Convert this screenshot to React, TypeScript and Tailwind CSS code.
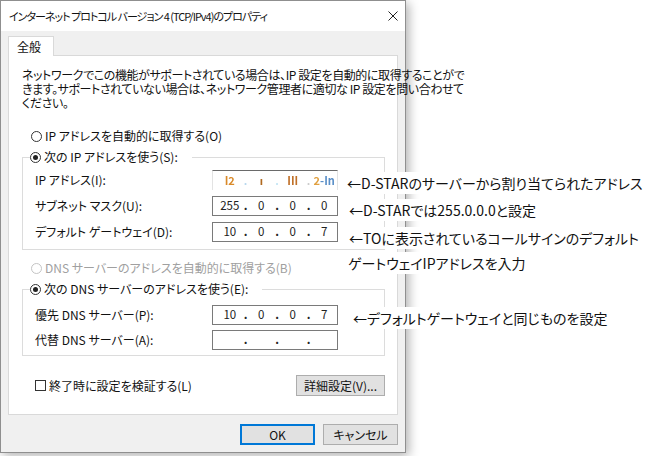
import React from 'react'

const jp = "font-['Noto_Sans_CJK_JP','Noto_Sans',sans-serif] [font-feature-settings:'palt']"

function Radio({ checked, disabled, label }: { checked?: boolean; disabled?: boolean; label: string }) {
  return (
    <div className={`flex items-center h-[16px] gap-[3px] ${disabled ? 'text-[#a0a0a0]' : 'text-[#111]'}`}>
      <span
        className={`w-[11px] h-[11px] rounded-full border bg-white flex items-center justify-center ${
          disabled ? 'border-[#c4c4c4]' : 'border-[#333]'
        }`}
      >
        {checked && <span className="w-[5px] h-[5px] rounded-full bg-[#222]" />}
      </span>
      <span className="whitespace-nowrap">{label}</span>
    </div>
  )
}

function IpBox({ parts }: { parts?: string[] }) {
  const cells = parts ?? ['', '', '', '']
  return (
    <div className="w-[126px] h-[20px] border border-[#7a7a7a] bg-white flex items-center pl-[4px] text-[11.5px] text-[#222]">
      {cells.map((p, i) => (
        <React.Fragment key={i}>
          {i > 0 && <span className="w-[6px] text-center font-bold">.</span>}
          <span className="w-[26px] text-center">{p}</span>
        </React.Fragment>
      ))}
    </div>
  )
}

// the real address is pixelated in the screenshot
function MaskedIpBox() {
  return (
    <div className="w-[126px] h-[20px] border-t border-t-[#6a6a6a] border-x border-x-[#e3e3e3] bg-white flex items-center pl-[4px] text-[11px] font-bold blur-[0.6px]">
      <span className="w-[26px] text-center text-[#d98a2a]">I2</span>
      <span className="w-[6px] text-center text-[#b8d8ee]">.</span>
      <span className="w-[26px] text-center text-[#b06a20]">ı</span>
      <span className="w-[6px] text-center text-[#c2e4f4]">.</span>
      <span className="w-[26px] text-center text-[#c07028]">III</span>
      <span className="w-[6px] text-center text-[#ccc]">.</span>
      <span className="w-[26px] text-center text-[#5a8fc8]">
        <span className="text-[#e0a040]">2</span>-In
      </span>
    </div>
  )
}

function Row({ label, children }: { label: string; children: React.ReactNode }) {
  return (
    <div className="flex items-center h-[20px]">
      <span className="w-[177px] whitespace-nowrap">{label}</span>
      {children}
    </div>
  )
}

function Button({ children, primary }: { children: React.ReactNode; primary?: boolean }) {
  return (
    <div
      className={`w-[75px] h-[21px] bg-[#e1e1e1] flex items-center justify-center text-[12px] ${
        primary ? 'border-2 border-[#0078d7]' : 'border border-[#adadad]'
      }`}
    >
      {children}
    </div>
  )
}

export default function App() {
  return (
    <div className={`relative w-[660px] h-[456px] bg-white overflow-hidden text-[#111] ${jp}`}>
      {/* Dialog */}
      <div className="w-[406px] h-[453px] flex flex-col border border-[#8f8f8f] bg-[#f0f0f0] shadow-[3px_3px_10px_rgba(0,0,0,0.3)]">
        {/* Title bar */}
        <div className="h-[30px] bg-white flex items-center justify-between pl-[8px] pr-[7px]">
          <span className="whitespace-nowrap text-[11px] tracking-[-1px]">
            インターネット プロトコル バージョン 4 (TCP/IPv4)のプロパティ
          </span>
          <svg width="10" height="10" viewBox="0 0 10 10" className="text-[#222]">
            <path d="M0.5 0.5 L9.5 9.5 M9.5 0.5 L0.5 9.5" stroke="currentColor" strokeWidth="1" />
          </svg>
        </div>

        <div className="flex-1 flex flex-col px-[7px] pt-[5px] text-[12px]">
          {/* Tab */}
          <div className="relative z-10 -mb-px w-[46px] h-[20px] bg-white border border-b-0 border-[#d9d9d9] flex items-center pl-[8px]">
            全般
          </div>

          {/* Tab panel */}
          <div className="w-[390px] h-[360px] bg-white border border-[#d9d9d9] flex flex-col">
            <div className="pl-[13px] pt-[12px] leading-[14px] whitespace-nowrap tracking-[-0.4px]">
              <div>ネットワークでこの機能がサポートされている場合は、IP 設定を自動的に取得することがで</div>
              <div>きます。サポートされていない場合は、ネットワーク管理者に適切な IP 設定を問い合わせて</div>
              <div>ください。</div>
            </div>

            <div className="mt-[18px] pl-[22px]">
              <Radio label="IP アドレスを自動的に取得する(O)" />
            </div>

            <fieldset className="mt-[5px] ml-[13px] w-[363px] border border-[#dcdcdc]">
              <legend className="ml-[7px] pr-[14px]">
                <Radio checked label="次の IP アドレスを使う(S):" />
              </legend>
              <div className="flex flex-col pt-[5px] pb-[7px] pl-[12px] gap-[6px]">
                <Row label="IP アドレス(I):">
                  <MaskedIpBox />
                </Row>
                <Row label="サブネット マスク(U):">
                  <IpBox parts={['255', '0', '0', '0']} />
                </Row>
                <Row label="デフォルト ゲートウェイ(D):">
                  <IpBox parts={['10', '0', '0', '7']} />
                </Row>
              </div>
            </fieldset>

            <div className="mt-[10px] pl-[22px]">
              <Radio disabled label="DNS サーバーのアドレスを自動的に取得する(B)" />
            </div>

            <fieldset className="mt-[5px] ml-[13px] w-[363px] border border-[#dcdcdc]">
              <legend className="ml-[7px] pr-[14px]">
                <Radio checked label="次の DNS サーバーのアドレスを使う(E):" />
              </legend>
              <div className="flex flex-col pt-[8px] pb-[5px] pl-[12px] gap-[5px]">
                <Row label="優先 DNS サーバー(P):">
                  <IpBox parts={['10', '0', '0', '7']} />
                </Row>
                <Row label="代替 DNS サーバー(A):">
                  <IpBox />
                </Row>
              </div>
            </fieldset>

            <div className="mt-[19px] flex items-center justify-between h-[21px] pl-[26px] pr-[12px]">
              <div className="flex items-center gap-[3px]">
                <span className="w-[11px] h-[11px] border border-[#333] bg-white" />
                <span>終了時に設定を検証する(L)</span>
              </div>
              <div className="w-[89px] h-[21px] bg-[#e1e1e1] border border-[#adadad] flex items-center justify-center">
                詳細設定(V)...
              </div>
            </div>
          </div>

          {/* Dialog buttons */}
          <div className="mt-[9px] flex justify-end gap-[8px]">
            <Button primary>OK</Button>
            <Button>キャンセル</Button>
          </div>
        </div>
      </div>

      {/* Annotations */}
      <span className="absolute left-[347px] top-[172px] bg-white text-[14px] leading-[22px] whitespace-nowrap">
        ←D-STARのサーバーから割り当てられたアドレス
      </span>
      <span className="absolute left-[349px] top-[199px] bg-white text-[14px] leading-[22px] whitespace-nowrap">
        ←D-STARでは255.0.0.0と設定
      </span>
      <span className="absolute left-[349px] top-[227px] bg-white text-[14px] leading-[22px] whitespace-nowrap">
        ←TOに表示されているコールサインのデフォルト
      </span>
      <span className="absolute left-[348px] top-[252px] bg-white text-[14px] leading-[22px] whitespace-nowrap">
        ゲートウェイIPアドレスを入力
      </span>
      <span className="absolute left-[353px] top-[307px] bg-white text-[14px] leading-[22px] whitespace-nowrap">
        ←デフォルトゲートウェイと同じものを設定
      </span>
    </div>
  )
}
